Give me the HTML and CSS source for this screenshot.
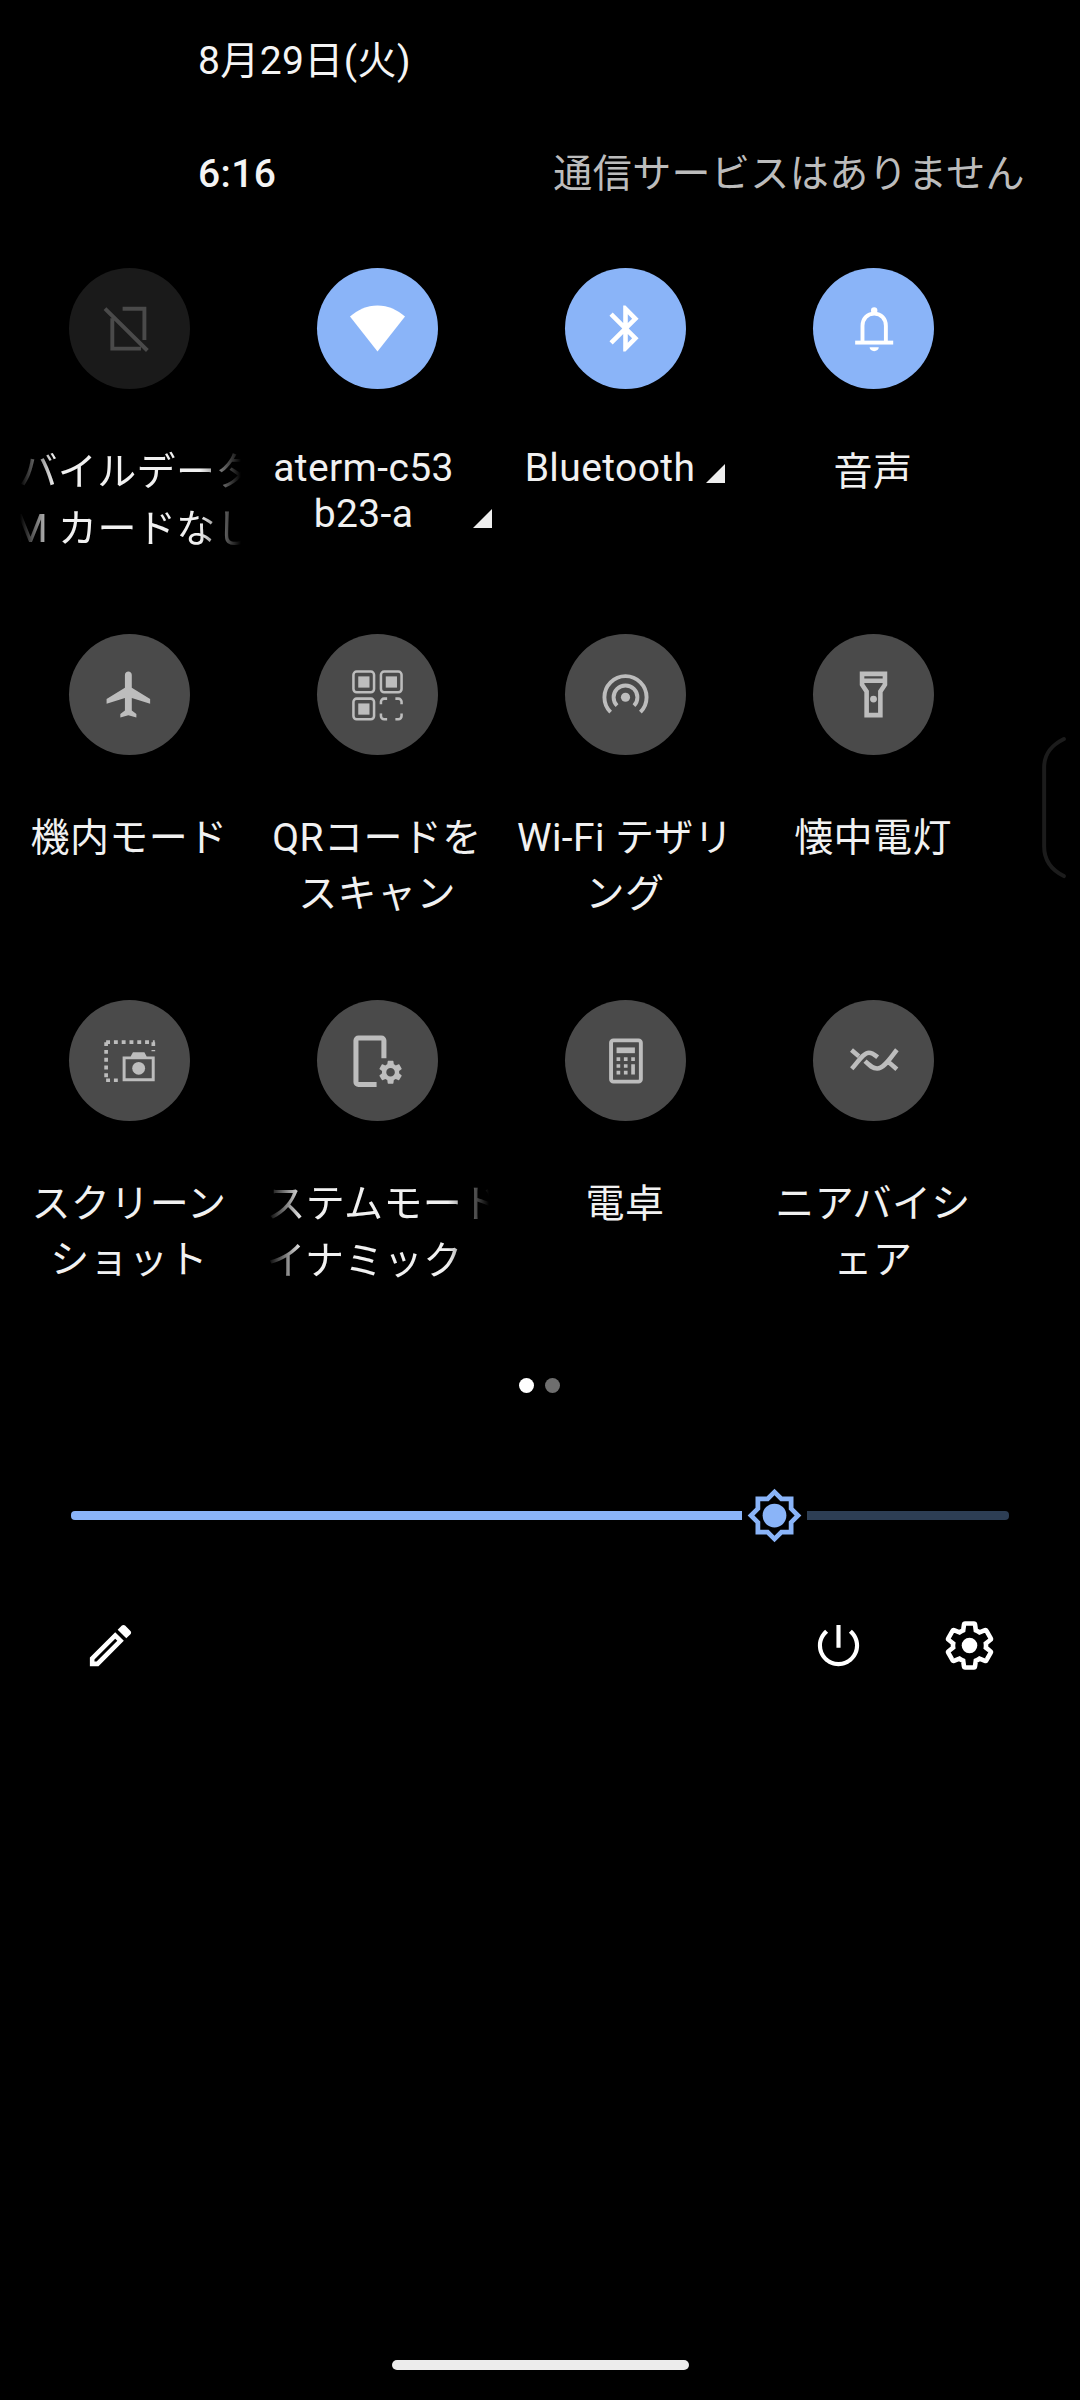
FILE: index.html
```html
<!DOCTYPE html>
<html lang="ja">
<head>
<meta charset="utf-8">
<title>Quick settings</title>
<link rel="stylesheet" href="styles.css">
</head>
<body>
<main class="page">
  <header class="header">
    <div class="date">8月29日(火)</div>
    <div class="status">
      <span class="time">6:16</span>
      <span class="carrier">通信サービスはありません</span>
    </div>
  </header>

  <section class="grid">
    <div class="tile">
      <div class="circle dim">
        <svg class="ico" viewBox="0 0 24 24"><path class="line dimline" d="M9 3.4H18.5V17M4.5 7.5V20.8H17M1.3 3.3L19.8 21.6"/></svg>
      </div>
      <div class="marquee"><span>モバイルデータ</span><span>SIM カードなし</span></div>
    </div>
    <div class="tile">
      <div class="circle on">
        <svg class="ico" viewBox="0 0 24 24"><path d="M12 22L0 6.8C3.3 4 7.3 2 12 2s8.7 2 12 4.8z"/></svg>
      </div>
      <div class="label-row">
        <div class="label latin wide">aterm-c53<br>b23-a</div>
        <svg class="caret" viewBox="0 0 19 19"><path d="M19 0V19H0z"/></svg>
      </div>
    </div>
    <div class="tile">
      <div class="circle on">
        <svg class="ico" viewBox="0 0 24 24"><path d="M17.71 7.71L12 2h-1v7.59L6.41 5 5 6.41 10.59 12 5 17.59 6.41 19 11 14.41V22h1l5.71-5.71-4.3-4.29 4.3-4.29zM13 5.83l1.88 1.88L13 9.59V5.83zm1.88 10.46L13 18.17v-3.76l1.88 1.88z"/></svg>
      </div>
      <div class="label-row gap">
        <div class="label latin">Bluetooth</div>
        <svg class="caret" viewBox="0 0 19 19"><path d="M19 0V19H0z"/></svg>
      </div>
    </div>
    <div class="tile">
      <div class="circle on">
        <svg class="ico" viewBox="0 0 24 24"><circle cx="12.3" cy="4.1" r="1.4"/><path class="line" d="M7.2 18v-7.2c0-3 2-5.3 5.1-5.3s5.1 2.3 5.1 5.3V18"/><rect x="4" y="17.3" width="16.6" height="1.7"/><path d="M10.3 20.2h4a2 1.7 0 0 1-4 0z"/></svg>
      </div>
      <div class="label">音声</div>
    </div>

    <div class="tile">
      <div class="circle">
        <svg class="ico" viewBox="0 0 24 24"><path d="M21 16v-2l-8-5V3.5c0-.83-.67-1.5-1.5-1.5S10 2.67 10 3.5V9l-8 5v2l8-2.5V19l-2 1.5V22l3.5-1 3.5 1v-1.5L13 19v-5.5l8 2.5z"/></svg>
      </div>
      <div class="label">機内モード</div>
    </div>
    <div class="tile">
      <div class="circle">
        <svg class="ico" viewBox="0 0 24 24">
          <rect class="thin" x="1.5" y="2" width="9" height="9" rx="1.4"/><rect x="3.6" y="4.1" width="4.9" height="4.9"/>
          <rect class="thin" x="13.5" y="2" width="9" height="9" rx="1.4"/><rect x="15.6" y="4.1" width="4.9" height="4.9"/>
          <rect class="thin" x="1.5" y="13.8" width="9" height="9" rx="1.4"/><rect x="3.6" y="15.9" width="4.9" height="4.9"/>
          <path class="thin" d="M13.5 16.3v-1.1a1.4 1.4 0 0 1 1.4-1.4h1.3M19.8 13.8h1.3a1.4 1.4 0 0 1 1.4 1.4v1.1M22.5 20.3v1.1a1.4 1.4 0 0 1-1.4 1.4h-1.3M16.2 22.8h-1.3a1.4 1.4 0 0 1-1.4-1.4v-1.1"/>
        </svg>
      </div>
      <div class="label">QRコードを<br>スキャン</div>
    </div>
    <div class="tile">
      <div class="circle">
        <svg class="ico" viewBox="0 0 24 24"><path class="line" d="M5.5 19.7A9.2 9.2 0 1 1 18.5 19.7M8.3 16.9A5.2 5.2 0 1 1 15.7 16.9"/><circle cx="12" cy="13.2" r="2"/></svg>
      </div>
      <div class="label">Wi-Fi テザリ<br>ング</div>
    </div>
    <div class="tile">
      <div class="circle">
        <svg class="ico" viewBox="0 0 24 24"><path d="M18 2H6v6l2 3v11h8V11l2-3V2zM16 4v1H8V4h8zM14 10.39V20h-4v-9.61l-2-3V7h8v.39l-2 3z"/><circle cx="12" cy="14" r="1.5"/></svg>
      </div>
      <div class="label">懐中電灯</div>
    </div>

    <div class="tile">
      <div class="circle">
        <svg class="ico" viewBox="0 0 24 24">
          <path class="dash" d="M1.8 4H23M1.8 4V21M1.8 20.6H7.6M22.4 4V8"/>
          <path d="M13.5 8.4h5l1 1.8H23V21H9V10.2h3.5zM10.3 11.5v8.2h11.4v-8.2z" fill-rule="evenodd"/>
          <circle cx="16" cy="15.4" r="2.8"/>
        </svg>
      </div>
      <div class="label">スクリーン<br>ショット</div>
    </div>
    <div class="tile">
      <div class="circle">
        <svg class="ico" viewBox="0 0 24 24">
          <path class="thick" d="M11.6 22.5H3.7a1.1 1.1 0 0 1-1.1-1.1V3.3a1.1 1.1 0 0 1 1.1-1.1h10a1.1 1.1 0 0 1 1.1 1.1V11"/>
          <g transform="translate(11.46 10.86) scale(.52)"><path d="M19.14 12.94c.04-.3.06-.61.06-.94 0-.32-.02-.64-.07-.94l2.03-1.58c.18-.14.23-.41.12-.61l-1.92-3.32c-.12-.22-.37-.29-.59-.22l-2.39.96c-.5-.38-1.03-.7-1.62-.94l-.36-2.54c-.04-.24-.24-.41-.48-.41h-3.84c-.24 0-.43.17-.47.41l-.36 2.54c-.59.24-1.13.57-1.62.94l-2.39-.96c-.22-.08-.47 0-.59.22L2.74 8.87c-.12.21-.08.47.12.61l2.03 1.58c-.05.3-.09.63-.09.94s.02.64.07.94l-2.03 1.58c-.18.14-.23.41-.12.61l1.92 3.32c.12.22.37.29.59.22l2.39-.96c.5.38 1.03.7 1.62.94l.36 2.54c.05.24.24.41.48.41h3.84c.24 0 .44-.17.47-.41l.36-2.54c.59-.24 1.13-.56 1.62-.94l2.39.96c.22.08.47 0 .59-.22l1.92-3.32c.12-.22.07-.47-.12-.61l-2.01-1.58zM12 15.6c-1.98 0-3.6-1.62-3.6-3.6s1.62-3.6 3.6-3.6 3.6 1.62 3.6 3.6-1.62 3.6-3.6 3.6z"/></g>
        </svg>
      </div>
      <div class="marquee second"><span>システムモード</span><span>ダイナミック</span></div>
    </div>
    <div class="tile">
      <div class="circle">
        <svg class="ico" viewBox="0 0 24 24">
          <rect class="line" x="5.7" y="3.2" width="13" height="18" rx="1"/>
          <rect x="8.1" y="6.3" width="8" height="2.5"/>
          <path d="M8.1 10.6h1.6v1.6H8.1zM11.3 10.6h1.6v1.6h-1.6zM14.5 10.6h1.6v1.6h-1.6zM8.1 13.6h1.6v1.6H8.1zM11.3 13.6h1.6v1.6h-1.6zM14.5 13.6h1.6v4.5h-1.6zM8.1 16.5h1.6v1.6H8.1zM11.3 16.5h1.6v1.6h-1.6z"/>
        </svg>
      </div>
      <div class="label">電卓</div>
    </div>
    <div class="tile">
      <div class="circle">
        <svg class="ico" viewBox="0 0 24 24"><path class="wave" d="M2.5 15.6C5 13 7.5 8.6 10 8.6c1.6 0 2.6 1 3.8 2M2.4 7.4l3.2 2.7M8.3 12.3c2 1.9 3.4 3.2 5.3 3.2 3 0 6-5 8.6-8.2M18.5 12.6l3.7 3.2"/></svg>
      </div>
      <div class="label">ニアバイシ<br>ェア</div>
    </div>
  </section>

  <div class="pager"><i class="pip active"></i><i class="pip"></i></div>

  <div class="slider">
    <div class="bar filled"></div>
    <svg class="thumb" viewBox="0 0 24 24"><path fill-rule="evenodd" d="M20 15.31L23.31 12 20 8.69V4h-4.69L12 .69 8.69 4H4v4.69L.69 12 4 15.31V20h4.69L12 23.31 15.31 20H20v-4.69zM18 14.48V18h-3.52L12 20.48 9.52 18H6v-3.52L3.52 12 6 9.52V6h3.52L12 3.52 14.48 6H18v3.52L20.48 12 18 14.48z"/><circle cx="12" cy="12" r="5"/></svg>
    <div class="bar rest"></div>
  </div>

  <footer class="actions">
    <svg class="act" viewBox="0 0 24 24"><path d="M14.06 9.02l.92.92L5.92 19H5v-.92l9.06-9.06M17.66 3c-.25 0-.51.1-.7.29l-1.83 1.83 3.75 3.75 1.83-1.83c.39-.39.39-1.02 0-1.41l-2.34-2.34c-.2-.2-.45-.29-.71-.29zm-3.6 3.19L3 17.25V21h3.75L17.81 9.94l-3.75-3.75z"/></svg>
    <div class="actions-right">
      <svg class="act" viewBox="0 0 24 24"><path d="M12.9 3h-1.8v10h1.8zM17.83 5.17l-1.3 1.3C18.1 7.8 19.2 9.8 19.2 12c0 4-3.2 7.2-7.2 7.2S4.8 16 4.8 12c0-2.2 1.1-4.2 2.67-5.53l-1.3-1.3C4.23 6.82 3 9.26 3 12c0 4.97 4.03 9 9 9s9-4.03 9-9c0-2.74-1.23-5.18-3.17-6.83z"/></svg>
      <svg class="act" viewBox="0 0 24 24"><path class="line" d="M19.14 12.94c.04-.3.06-.61.06-.94 0-.32-.02-.64-.07-.94l2.03-1.58c.18-.14.23-.41.12-.61l-1.92-3.32c-.12-.22-.37-.29-.59-.22l-2.39.96c-.5-.38-1.03-.7-1.62-.94l-.36-2.54c-.04-.24-.24-.41-.48-.41h-3.84c-.24 0-.43.17-.47.41l-.36 2.54c-.59.24-1.13.57-1.62.94l-2.39-.96c-.22-.08-.47 0-.59.22L2.74 8.87c-.12.21-.08.47.12.61l2.03 1.58c-.05.3-.09.63-.09.94s.02.64.07.94l-2.03 1.58c-.18.14-.23.41-.12.61l1.92 3.32c.12.22.37.29.59.22l2.39-.96c.5.38 1.03.7 1.62.94l.36 2.54c.05.24.24.41.48.41h3.84c.24 0 .44-.17.47-.41l.36-2.54c.59-.24 1.13-.56 1.62-.94l2.39.96c.22.08.47 0 .59-.22l1.92-3.32c.12-.22.07-.47-.12-.61l-2.01-1.58z"/><circle cx="12" cy="12" r="3.4"/></svg>
    </div>
  </footer>

  <div class="home"></div>
  <svg class="edge" viewBox="0 0 30 150"><path d="M24 3C12 9 4 17 4 32V112C4 127 12 136 24 142"/></svg>
</main>
</body>
</html>
```

FILE: styles.css
```css
* { box-sizing: border-box; }
html, body { margin: 0; padding: 0; background: #000; }
.page {
  position: relative;
  width: 1080px;
  height: 2400px;
  display: flex;
  flex-direction: column;
  overflow: hidden;
  background: #000;
  color: #f1f1f1;
  font-family: Roboto, "Noto Sans CJK JP", sans-serif;
  font-size: 39px;
  letter-spacing: 0.4px;
}
.header { height: 268px; padding: 33px 55px 0 198px; }
.date { height: 56px; line-height: 56px; color: #f4f4f4; }
.status {
  margin-top: 57px;
  height: 56px;
  line-height: 56px;
  display: flex;
  justify-content: space-between;
}
.time { font-weight: 500; color: #f4f4f4; }
.carrier { color: #bcbcbc; }

.grid {
  display: grid;
  grid-template-columns: repeat(4, 248px);
  grid-auto-rows: 366px;
  padding-left: 5px;
}
.tile { position: relative; display: flex; flex-direction: column; align-items: center; }
.circle {
  width: 121px;
  height: 121px;
  border-radius: 50%;
  margin-bottom: 55px;
  background: #4a4a4a;
  color: #bdbdbd;
  display: flex;
  align-items: center;
  justify-content: center;
  flex: none;
}
.circle.on { background: #8ab4f8; color: #fff; }
.circle.dim { background: #1a1a1a; color: #4a4a4a; }
.ico { width: 55px; height: 55px; fill: currentColor; }
.line { fill: none; stroke: currentColor; stroke-width: 1.7; }
.wave { fill: none; stroke: currentColor; stroke-width: 2; }
.thin { fill: none; stroke: currentColor; stroke-width: 1.1; }
.thick { fill: none; stroke: currentColor; stroke-width: 2.2; }
.dash { fill: none; stroke: currentColor; stroke-width: 1.6; stroke-dasharray: 1.7 1.7; }
.dimline { stroke-width: 1.7; }

.label { text-align: center; line-height: 56px; white-space: nowrap; }
.label.latin { line-height: 46px; height: 46px; margin-top: 1px; }
.label-row { display: flex; align-items: flex-end; justify-content: center; }
.label.wide { width: 219px; height: 92px; margin-left: -8px; }
.label-row.gap { gap: 11px; margin-top: 0; }
.caret { width: 19px; height: 19px; margin-bottom: 9px; fill: #eee; flex: none; }
.gap .caret { margin-bottom: 8px; }

.marquee {
  width: 221px;
  align-self: flex-start;
  margin-left: 15px;
  overflow: hidden;
  display: flex;
  flex-direction: column;
  line-height: 57px;
  white-space: nowrap;
  -webkit-mask-image: linear-gradient(to right, transparent 0, #000 34px, #000 180px, transparent 221px);
  mask-image: linear-gradient(to right, transparent 0, #000 34px, #000 180px, transparent 221px);
}
.marquee span { display: block; margin-left: -41px; }
.marquee.second { margin-left: 15px; }
.pager { position: absolute; left: 519px; top: 1378px; display: flex; gap: 11px; }
.pip { width: 15px; height: 15px; border-radius: 50%; background: #6e6e6e; }
.pip.active { background: #fff; }

.slider {
  margin-top: 120px;
  height: 58px;
  padding-left: 71px;
  display: flex;
  align-items: center;
}
.bar { height: 9px; }
.bar.filled { width: 671px; background: #8ab4f8; border-radius: 4px 0 0 4px; }
.bar.rest { width: 202px; background: #2d3e54; border-radius: 0 4px 4px 0; }
.thumb { width: 57px; height: 57px; margin: 0 4px; fill: #8ab4f8; flex: none; }

.actions {
  margin-top: 74px;
  padding: 0 83px 0 83px;
  display: flex;
  justify-content: space-between;
  align-items: center;
}
.actions-right { display: flex; gap: 76px; }
.act { width: 55px; height: 55px; fill: #fff; color: #fff; }
.act .line { stroke-width: 2; }

.home {
  margin-top: auto;
  margin-bottom: 30px;
  align-self: center;
  width: 297px;
  height: 10px;
  border-radius: 5px;
  background: #ececec;
}
.edge {
  position: absolute;
  left: 1040px;
  top: 736px;
  width: 30px;
  height: 148px;
  fill: none;
  stroke: #1c1c1c;
  stroke-width: 4;
  stroke-linecap: round;
}
```
